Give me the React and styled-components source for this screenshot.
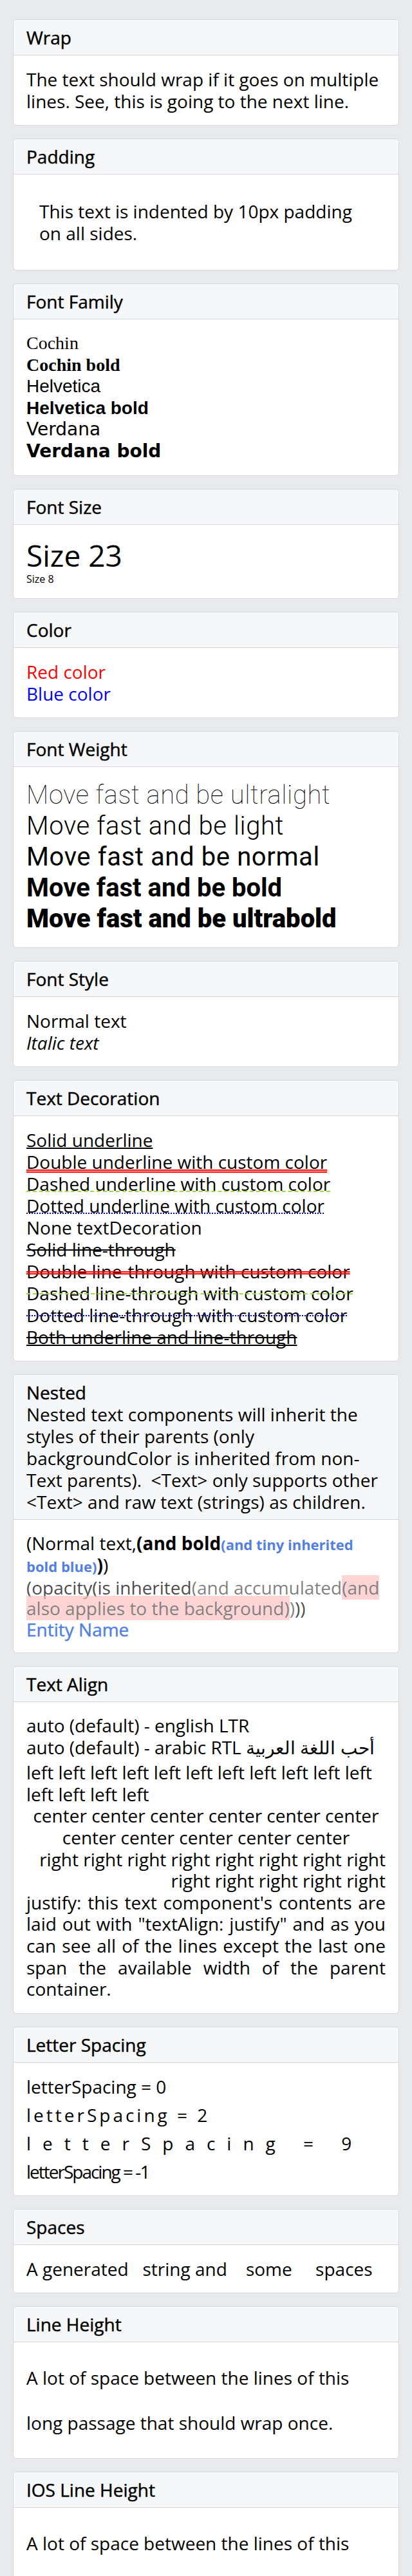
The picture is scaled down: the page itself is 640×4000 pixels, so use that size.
import React from 'react';
import styled, { createGlobalStyle, css } from 'styled-components';

const GlobalStyle = createGlobalStyle`
  html, body {
    margin: 0;
    padding: 0;
    background: #e9eaed;
  }
  body {
    font-family: "Open Sans", Roboto, "Liberation Sans", sans-serif;
    color: #000;
    -webkit-font-smoothing: antialiased;
  }
`;

const medium = css`
  font-weight: 500;
  -webkit-text-stroke: 0.45px currentColor;
`;

const Page = styled.main`
  display: flex;
  flex-direction: column;
  gap: 20px;
  padding: 30px 20px;
  background: #e9eaed;
`;

const CardBox = styled.section`
  background: #ffffff;
  border: 1px solid #d6d7da;
  border-radius: 6px;
  overflow: hidden;
`;

const Header = styled.header`
  background: #f6f7f8;
  border-bottom: 1px solid #d6d7da;
  padding: 10px 20px;
`;

const Title = styled.div`
  font-size: 28px;
  line-height: 34px;
  ${medium}
`;

const Description = styled.div`
  font-size: 28px;
  line-height: 34px;
  white-space: pre-wrap;
`;

const Body = styled.div`
  margin: 20px;
`;

const Text = styled.div`
  font-size: 28px;
  line-height: ${(p) => p.$lh || '34px'};
  text-align: ${(p) => p.$align || 'left'};
  padding: ${(p) => p.$pad || '0'};
  padding-bottom: ${(p) => p.$padBottom || undefined};
  white-space: ${(p) => (p.$pre ? 'pre-wrap' : 'normal')};
`;

const FamilyLine = styled.div`
  font-family: ${(p) => p.$family};
  font-weight: ${(p) => (p.$bold ? 700 : 400)};
  font-size: 28px;
  line-height: 33.6px;
`;

const SizedText = styled.div`
  font-size: ${(p) => p.$size}px;
  line-height: 1.2;
`;

const ColorText = styled.div`
  font-size: 28px;
  line-height: 34px;
  color: ${(p) => p.$color};
`;

const WeightLine = styled.div`
  font-family: Roboto, "Open Sans", sans-serif;
  font-size: 40px;
  line-height: 48px;
  font-weight: ${(p) => p.$weight};
  letter-spacing: ${(p) => (p.$weight >= 700 ? '0' : '0.6px')};
`;

const StyleLine = styled.div`
  font-size: 28px;
  line-height: 34px;
  font-style: ${(p) => p.$style};
`;

const DecoLine = styled.div`
  font-size: 28px;
  line-height: 34px;
  span {
    text-decoration-line: ${(p) => p.$line};
    text-decoration-style: ${(p) => p.$kind || 'solid'};
    text-decoration-color: ${(p) => p.$color || '#000'};
    text-decoration-thickness: ${(p) => (p.$kind === 'double' ? '1.5px' : '2px')};
    text-decoration-skip-ink: none;
  }
`;

const NestedLine = styled.div`
  font-size: 28px;
  line-height: 32.4px;
  ${(p) =>
    p.$faded &&
    css`
      opacity: 0.7;
    `}
`;

const Bold = styled.span`
  font-weight: 700;
`;

const TinyBlue = styled.span`
  font-size: 22px;
  color: #527fe4;
`;

const Faded = styled.span`
  opacity: 0.7;
`;

const PinkBg = styled.span`
  background-color: #ffaaaa;
`;

const Entity = styled.span`
  ${medium}
  color: #527fe4;
`;

const SpacedLine = styled.div`
  font-size: 28px;
  line-height: 34px;
  letter-spacing: ${(p) => p.$spacing}px;
  margin-top: ${(p) => (p.$first ? 0 : 10)}px;
`;

function Card({ title, description, children }) {
  return (
    <CardBox>
      <Header>
        <Title>{title}</Title>
        {description && <Description>{description}</Description>}
      </Header>
      <Body>{children}</Body>
    </CardBox>
  );
}

export default function App() {
  return (
    <>
      <GlobalStyle />
      <Page>
        <Card title="Wrap">
          <Text>
            The text should wrap if it goes on multiple lines. See, this is going to the next line.
          </Text>
        </Card>

        <Card title="Padding">
          <Text $pad="20px">This text is indented by 10px padding on all sides.</Text>
        </Card>

        <Card title="Font Family">
          <FamilyLine $family='"Liberation Serif", serif'>Cochin</FamilyLine>
          <FamilyLine $family='"Liberation Serif", serif' $bold>
            Cochin bold
          </FamilyLine>
          <FamilyLine $family='"Liberation Sans", sans-serif'>Helvetica</FamilyLine>
          <FamilyLine $family='"Liberation Sans", sans-serif' $bold>
            Helvetica bold
          </FamilyLine>
          <FamilyLine $family='"DejaVu Sans", sans-serif'>Verdana</FamilyLine>
          <FamilyLine $family='"DejaVu Sans", sans-serif' $bold>
            Verdana bold
          </FamilyLine>
        </Card>

        <Card title="Font Size">
          <SizedText $size={46}>Size 23</SizedText>
          <SizedText $size={16}>Size 8</SizedText>
        </Card>

        <Card title="Color">
          <ColorText $color="#ff0000">Red color</ColorText>
          <ColorText $color="#0000ff">Blue color</ColorText>
        </Card>

        <Card title="Font Weight">
          <WeightLine $weight={100}>Move fast and be ultralight</WeightLine>
          <WeightLine $weight={300}>Move fast and be light</WeightLine>
          <WeightLine $weight={400}>Move fast and be normal</WeightLine>
          <WeightLine $weight={700}>Move fast and be bold</WeightLine>
          <WeightLine $weight={900}>Move fast and be ultrabold</WeightLine>
        </Card>

        <Card title="Font Style">
          <StyleLine $style="normal">Normal text</StyleLine>
          <StyleLine $style="italic">Italic text</StyleLine>
        </Card>

        <Card title="Text Decoration">
          <DecoLine $line="underline" $kind="solid">
            <span>Solid underline</span>
          </DecoLine>
          <DecoLine $line="underline" $kind="double" $color="#ff0000">
            <span>Double underline with custom color</span>
          </DecoLine>
          <DecoLine $line="underline" $kind="dashed" $color="#9cdc40">
            <span>Dashed underline with custom color</span>
          </DecoLine>
          <DecoLine $line="underline" $kind="dotted" $color="#0000ff">
            <span>Dotted underline with custom color</span>
          </DecoLine>
          <DecoLine $line="none">
            <span>None textDecoration</span>
          </DecoLine>
          <DecoLine $line="line-through" $kind="solid">
            <span>Solid line-through</span>
          </DecoLine>
          <DecoLine $line="line-through" $kind="double" $color="#ff0000">
            <span>Double line-through with custom color</span>
          </DecoLine>
          <DecoLine $line="line-through" $kind="dashed" $color="#9cdc40">
            <span>Dashed line-through with custom color</span>
          </DecoLine>
          <DecoLine $line="line-through" $kind="dotted" $color="#0000ff">
            <span>Dotted line-through with custom color</span>
          </DecoLine>
          <DecoLine $line="underline line-through">
            <span>Both underline and line-through</span>
          </DecoLine>
        </Card>

        <Card
          title="Nested"
          description={
            'Nested text components will inherit the styles of their parents (only backgroundColor is inherited from non-Text parents).  <Text> only supports other <Text> and raw text (strings) as children.'
          }
        >
          <NestedLine>
            (Normal text,
            <Bold>
              (and bold
              <TinyBlue>(and tiny inherited bold blue)</TinyBlue>)
            </Bold>
            )
          </NestedLine>
          <NestedLine $faded>
            (opacity
            <span>
              (is inherited
              <Faded>
                (and accumulated
                <PinkBg>(and also applies to the background)</PinkBg>)
              </Faded>
              )
            </span>
            )
          </NestedLine>
          <NestedLine>
            <Entity>Entity Name</Entity>
          </NestedLine>
        </Card>

        <Card title="Text Align">
          <Text $lh="33.6px">auto (default) - english LTR</Text>
          <Text $lh="33.6px" $padBottom="6px">
            auto (default) - arabic RTL أحب اللغة العربية
          </Text>
          <Text $lh="33.6px" $align="left">
            left left left left left left left left left left left left left left left
          </Text>
          <Text $lh="33.6px" $align="center">
            center center center center center center center center center center center
          </Text>
          <Text $lh="33.6px" $align="right">
            right right right right right right right right right right right right right
          </Text>
          <Text $lh="33.6px" $align="justify">
            justify: this text component's contents are laid out with "textAlign: justify" and as you
            can see all of the lines except the last one span the available width of the parent
            container.
          </Text>
        </Card>

        <Card title="Letter Spacing">
          <SpacedLine $first $spacing={0}>
            letterSpacing = 0
          </SpacedLine>
          <SpacedLine $spacing={4}>letterSpacing = 2</SpacedLine>
          <SpacedLine $spacing={18}>letterSpacing = 9</SpacedLine>
          <SpacedLine $spacing={-2}>letterSpacing = -1</SpacedLine>
        </Card>

        <Card title="Spaces">
          <Text $pre>{'A generated   string and    some     spaces'}</Text>
        </Card>

        <Card title="Line Height">
          <Text $lh="70px">
            A lot of space between the lines of this long passage that should wrap once.
          </Text>
        </Card>

        <Card title="IOS Line Height">
          <Text $lh="70px">
            A lot of space between the lines of this long passage that should wrap once.
          </Text>
        </Card>
      </Page>
    </>
  );
}
